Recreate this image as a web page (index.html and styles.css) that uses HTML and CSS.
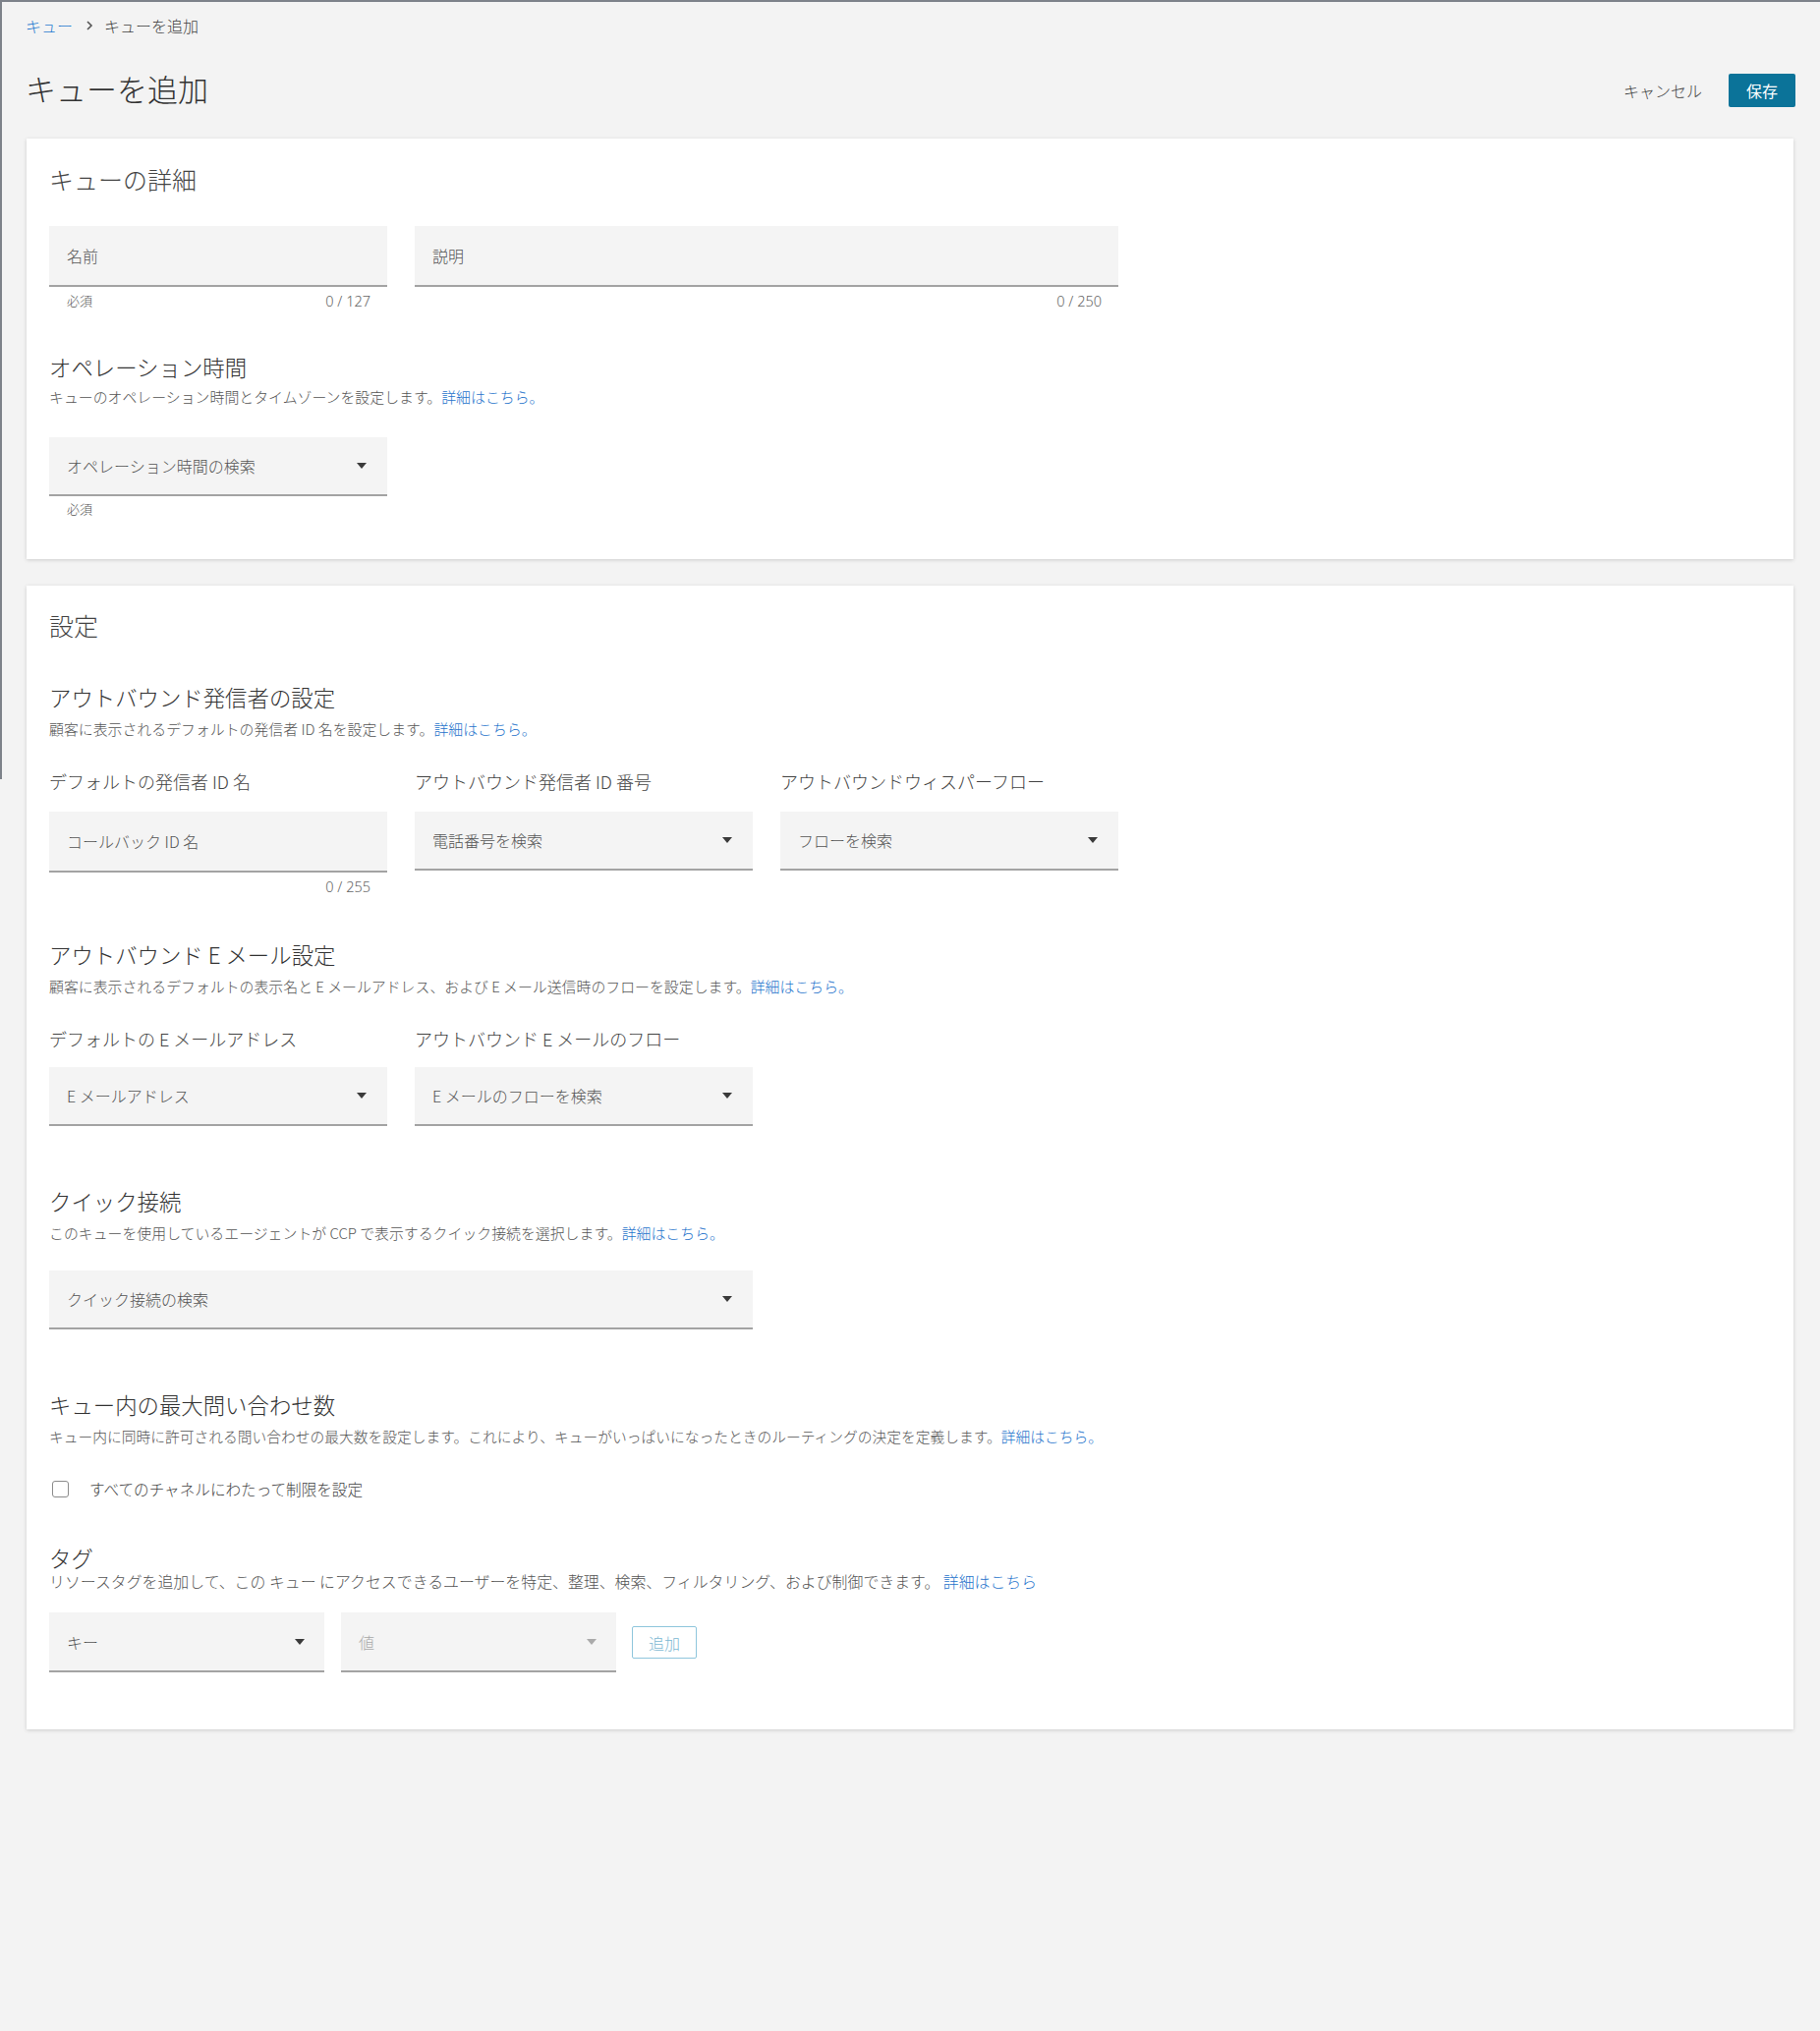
FILE: index.html
```html
<!DOCTYPE html>
<html lang="ja">
<head>
<meta charset="utf-8">
<title>キューを追加</title>
<link rel="stylesheet" href="styles.css">
</head>
<body>
<div class="frame-edge"></div>
<div class="page">
  <nav class="breadcrumb">
    <a class="crumb-link" href="#">キュー</a>
    <svg class="crumb-sep" width="8" height="10" viewBox="0 0 8 10"><polyline points="2,1 6,5 2,9" fill="none" stroke="#555" stroke-width="1.6"/></svg>
    <span class="crumb-current">キューを追加</span>
  </nav>

  <header class="page-header">
    <h1 class="page-title">キューを追加</h1>
    <div class="actions">
      <button class="btn-cancel" type="button">キャンセル</button>
      <button class="btn-save" type="button">保存</button>
    </div>
  </header>

  <section class="card card-details">
    <h2 class="card-title">キューの詳細</h2>
    <div class="grid row-first">
      <div class="field">
        <div class="input">名前</div>
        <div class="helper"><span>必須</span><span class="count">0 / 127</span></div>
      </div>
      <div class="field span-2">
        <div class="input">説明</div>
        <div class="helper"><span></span><span class="count">0 / 250</span></div>
      </div>
    </div>

    <h3 class="section-title sec-hours">オペレーション時間</h3>
    <p class="section-desc desc-tight">キューのオペレーション時間とタイムゾーンを設定します。<a href="#" class="link">詳細はこちら。</a></p>
    <div class="grid ctrl-hours">
      <div class="field">
        <div class="select"><span>オペレーション時間の検索</span><span class="caret"></span></div>
        <div class="helper helper-tight"><span>必須</span></div>
      </div>
    </div>
  </section>

  <section class="card card-settings">
    <h2 class="card-title">設定</h2>

    <h3 class="section-title sec-caller">アウトバウンド発信者の設定</h3>
    <p class="section-desc">顧客に表示されるデフォルトの発信者 ID 名を設定します。<a href="#" class="link">詳細はこちら。</a></p>
    <div class="grid labeled-row">
      <div class="field">
        <label class="field-label">デフォルトの発信者 ID 名</label>
        <div class="input">コールバック ID 名</div>
        <div class="helper"><span></span><span class="count">0 / 255</span></div>
      </div>
      <div class="field">
        <label class="field-label">アウトバウンド発信者 ID 番号</label>
        <div class="select"><span>電話番号を検索</span><span class="caret"></span></div>
      </div>
      <div class="field">
        <label class="field-label">アウトバウンドウィスパーフロー</label>
        <div class="select"><span>フローを検索</span><span class="caret"></span></div>
      </div>
    </div>

    <h3 class="section-title sec-email">アウトバウンド E メール設定</h3>
    <p class="section-desc">顧客に表示されるデフォルトの表示名と E メールアドレス、および E メール送信時のフローを設定します。<a href="#" class="link">詳細はこちら。</a></p>
    <div class="grid labeled-row label-close">
      <div class="field">
        <label class="field-label">デフォルトの E メールアドレス</label>
        <div class="select"><span>E メールアドレス</span><span class="caret"></span></div>
      </div>
      <div class="field">
        <label class="field-label">アウトバウンド E メールのフロー</label>
        <div class="select"><span>E メールのフローを検索</span><span class="caret"></span></div>
      </div>
    </div>

    <h3 class="section-title sec-large">クイック接続</h3>
    <p class="section-desc">このキューを使用しているエージェントが CCP で表示するクイック接続を選択します。<a href="#" class="link">詳細はこちら。</a></p>
    <div class="grid ctrl-quick">
      <div class="field span-2">
        <div class="select"><span>クイック接続の検索</span><span class="caret"></span></div>
      </div>
    </div>

    <h3 class="section-title sec-large">キュー内の最大問い合わせ数</h3>
    <p class="section-desc desc-long">キュー内に同時に許可される問い合わせの最大数を設定します。これにより、キューがいっぱいになったときのルーティングの決定を定義します。<a href="#" class="link">詳細はこちら。</a></p>
    <label class="check-row"><span class="checkbox"></span><span class="check-label">すべてのチャネルにわたって制限を設定</span></label>

    <h3 class="section-title sec-tags">タグ</h3>
    <p class="section-desc desc-tags">リソースタグを追加して、この キュー にアクセスできるユーザーを特定、整理、検索、フィルタリング、および制御できます。 <a href="#" class="link">詳細はこちら</a></p>
    <div class="tag-row">
      <div class="select tag-select"><span>キー</span><span class="caret"></span></div>
      <div class="select tag-select is-disabled"><span>値</span><span class="caret"></span></div>
      <button class="btn-add" type="button">追加</button>
    </div>
  </section>
</div>
</body>
</html>
```

FILE: styles.css
```css
* { box-sizing: border-box; }

html, body {
  margin: 0;
  padding: 0;
}

body {
  background: #f3f3f3;
  font-family: "Noto Sans CJK JP", "Noto Sans", sans-serif;
  font-weight: 300;
  color: #3f3f3f;
  border-top: 2px solid #7d828a;
  min-height: 2067px;
}

.frame-edge {
  position: absolute;
  left: 0;
  top: 0;
  width: 2px;
  height: 793px;
  background: #7d828a;
}

.page {
  padding: 0 25px 0 26px;
}

/* breadcrumb */
.breadcrumb {
  display: flex;
  align-items: center;
  padding-top: 14px;
  height: 34px;
  font-size: 16px;
  line-height: 20px;
}

.crumb-link {
  color: #2a7bd0;
  text-decoration: none;
}

.crumb-sep {
  margin: 0 11px 0 13px;
}

.crumb-current {
  color: #444;
}

/* header */
.page-header {
  display: flex;
  align-items: center;
  justify-content: space-between;
  margin-top: 34px;
  height: 40px;
}

.page-title {
  margin: 0;
  font-size: 31px;
  line-height: 40px;
  font-weight: 300;
  color: #333;
}

.actions {
  display: flex;
  align-items: center;
  gap: 27px;
  margin-top: 4px;
}

.btn-cancel {
  border: 0;
  background: none;
  padding: 0;
  font: inherit;
  font-size: 16px;
  color: #444;
}

.btn-save {
  width: 68px;
  height: 34px;
  border: 0;
  border-radius: 2px;
  background: #0b7399;
  color: #fff;
  font: inherit;
  font-weight: 400;
  font-size: 16px;
  padding: 0;
}

/* cards */
.card {
  background: #fff;
  box-shadow: 0 1px 4px rgba(0, 0, 0, 0.16);
  margin: 31px 2px 0 1px;
  padding: 25px 23px 43px;
}

.card-settings {
  margin-top: 27px;
  padding-top: 24px;
  padding-bottom: 58px;
}

.card-title {
  margin: 0;
  font-size: 25px;
  line-height: 32px;
  font-weight: 300;
  color: #444;
}

.section-title {
  margin: 0;
  font-size: 22.4px;
  line-height: 30px;
  font-weight: 300;
  color: #333;
}

.sec-hours { margin-top: 44px; }
.sec-caller { margin-top: 42px; }
.sec-email { margin-top: 46px; }
.sec-large { margin-top: 61px; }
.sec-tags { margin-top: 43px; }

.section-desc {
  margin: 8px 0 0;
  font-size: 14.9px;
  line-height: 20px;
  color: #555;
}

.desc-tight { margin-top: 6px; }
.desc-long { font-size: 14.75px; }

.desc-tags {
  margin-top: 0;
  font-size: 15.9px;
}

.link {
  color: #1f74cc;
  text-decoration: none;
}

/* grid of fields */
.grid {
  display: grid;
  grid-template-columns: repeat(3, 344px);
  column-gap: 28px;
}

.span-2 { grid-column: span 2; }

.row-first { margin-top: 32px; }
.ctrl-hours { margin-top: 31px; }
.labeled-row { margin-top: 31px; }
.ctrl-quick { margin-top: 28px; }

.field {
  display: flex;
  flex-direction: column;
}

.field-label {
  font-size: 18px;
  line-height: 24px;
  color: #444;
  margin-bottom: 19px;
}

.label-close .field-label { margin-bottom: 17px; }

.input,
.select {
  display: flex;
  align-items: center;
  background: #f4f4f4;
  border-bottom: 2px solid #a3a3a3;
  padding: 0 21px 0 18px;
  font-size: 16px;
  color: #555;
}

.input { height: 62px; }

.select {
  height: 60px;
  justify-content: space-between;
}

.caret {
  width: 0;
  height: 0;
  border-left: 5.5px solid transparent;
  border-right: 5.5px solid transparent;
  border-top: 6px solid #3a3a3a;
}

.helper {
  display: flex;
  justify-content: space-between;
  margin-top: 6px;
  padding: 0 17px 0 18px;
  font-size: 13px;
  line-height: 16px;
  color: #555;
}

.helper-tight { margin-top: 5px; }

.count {
  font-family: "Noto Sans", sans-serif;
  font-size: 14.5px;
  color: #666;
}

/* checkbox */
.check-row {
  display: flex;
  align-items: center;
  margin-top: 31px;
  height: 24px;
}

.checkbox {
  width: 17px;
  height: 17px;
  margin-left: 3px;
  border: 1.5px solid #8c8c8c;
  border-radius: 3px;
  background: #fff;
}

.check-label {
  margin-left: 21px;
  font-size: 15.6px;
  color: #444;
}

/* tags */
.tag-row {
  display: flex;
  align-items: center;
  gap: 17px;
  margin-top: 21px;
}

.tag-select {
  width: 280px;
  height: 61px;
  padding-right: 20px;
}

.tag-select.is-disabled {
  color: #a8a8a8;
}

.tag-select.is-disabled .caret {
  border-top-color: #aaa;
}

.btn-add {
  width: 66px;
  height: 33px;
  margin-left: -1px;
  background: #fff;
  border: 1px solid #8fc6dc;
  border-radius: 2px;
  color: #7bb8d2;
  font: inherit;
  font-size: 16px;
  padding: 0;
}
```
